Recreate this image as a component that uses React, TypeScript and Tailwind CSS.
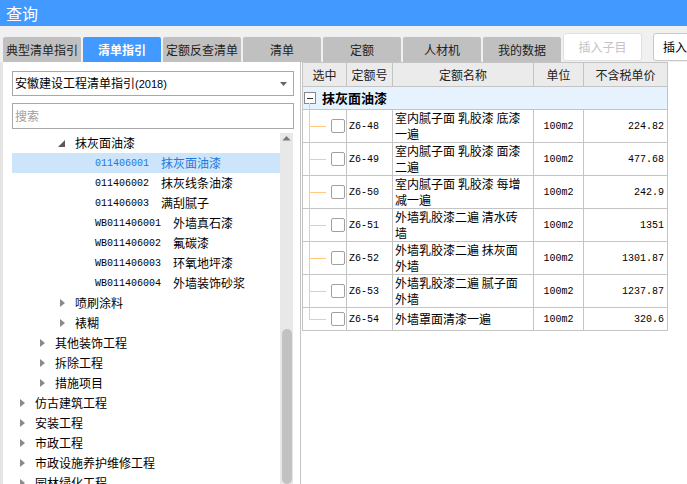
import type { ReactNode } from "react";

const tabs = ["典型清单指引", "清单指引", "定额反查清单", "清单", "定额", "人材机", "我的数据"];

type TreeNode = {
  indent: string;
  kind: "open" | "closed" | "leaf";
  code?: string;
  name: string;
  selected?: boolean;
};

const tree: TreeNode[] = [
  { indent: "pl-[46px]", kind: "open", name: "抹灰面油漆" },
  { indent: "pl-[83px]", kind: "leaf", code: "011406001", name: "抹灰面油漆", selected: true },
  { indent: "pl-[83px]", kind: "leaf", code: "011406002", name: "抹灰线条油漆" },
  { indent: "pl-[83px]", kind: "leaf", code: "011406003", name: "满刮腻子" },
  { indent: "pl-[83px]", kind: "leaf", code: "WB011406001", name: "外墙真石漆" },
  { indent: "pl-[83px]", kind: "leaf", code: "WB011406002", name: "氟碳漆" },
  { indent: "pl-[83px]", kind: "leaf", code: "WB011406003", name: "环氧地坪漆" },
  { indent: "pl-[83px]", kind: "leaf", code: "WB011406004", name: "外墙装饰砂浆" },
  { indent: "pl-[48px]", kind: "closed", name: "喷刷涂料" },
  { indent: "pl-[48px]", kind: "closed", name: "裱糊" },
  { indent: "pl-[28px]", kind: "closed", name: "其他装饰工程" },
  { indent: "pl-[28px]", kind: "closed", name: "拆除工程" },
  { indent: "pl-[28px]", kind: "closed", name: "措施项目" },
  { indent: "pl-[8px]", kind: "closed", name: "仿古建筑工程" },
  { indent: "pl-[8px]", kind: "closed", name: "安装工程" },
  { indent: "pl-[8px]", kind: "closed", name: "市政工程" },
  { indent: "pl-[8px]", kind: "closed", name: "市政设施养护维修工程" },
  { indent: "pl-[8px]", kind: "closed", name: "园林绿化工程" },
];

const rows = [
  { code: "Z6-48", name: ["室内腻子面 乳胶漆 底漆", "一遍"], price: "224.82" },
  { code: "Z6-49", name: ["室内腻子面 乳胶漆 面漆", "二遍"], price: "477.68" },
  { code: "Z6-50", name: ["室内腻子面 乳胶漆 每增", "减一遍"], price: "242.9" },
  { code: "Z6-51", name: ["外墙乳胶漆二遍 清水砖", "墙"], price: "1351" },
  { code: "Z6-52", name: ["外墙乳胶漆二遍 抹灰面", "外墙"], price: "1301.87" },
  { code: "Z6-53", name: ["外墙乳胶漆二遍 腻子面", "外墙"], price: "1237.87" },
  { code: "Z6-54", name: ["外墙罩面清漆一遍"], price: "320.6" },
];

const cjk = "font-['Noto_Sans_CJK_SC','Noto_Sans',sans-serif]";
const mono = "font-['Liberation_Mono','Noto_Sans_CJK_SC',monospace]";

function TreeRow({ node }: { node: TreeNode }) {
  let marker: ReactNode = null;
  if (node.kind === "open") {
    marker = (
      <span className="flex w-[17px] shrink-0 items-center">
        <svg width="7" height="7" viewBox="0 0 7 7">
          <polygon points="7,0 7,7 0,7" fill="#5a5a5a" />
        </svg>
      </span>
    );
  } else if (node.kind === "closed") {
    marker = (
      <span className="flex w-[15px] shrink-0 items-center">
        <svg width="5" height="8" viewBox="0 0 5 8">
          <polygon points="0,0 5,4 0,8" fill="#8a8a8a" />
        </svg>
      </span>
    );
  }
  return (
    <div
      className={`flex h-[20px] items-center whitespace-nowrap text-[12px] ${node.indent} ${
        node.selected ? "bg-[#cce5fa] text-[#1f78e0]" : "text-black"
      }`}
    >
      {marker}
      {node.code && <span className={`${mono} mr-[12px] text-[10px]`}>{node.code}</span>}
      <span>{node.name}</span>
    </div>
  );
}

export default function App() {
  return (
    <div className={`flex h-[484px] w-[687px] flex-col overflow-hidden bg-[#f0f0f0] ${cjk}`}>
      <div className="flex h-[26px] shrink-0 items-center bg-[#4299ff] pl-[6px] text-[16px] text-white">
        查询
      </div>

      <div className="flex h-[36px] shrink-0 items-end gap-[2px] overflow-hidden pl-[3px]">
        {tabs.map((t) => (
          <div
            key={t}
            className={`flex h-[25px] w-[78px] shrink-0 items-center justify-center whitespace-nowrap rounded-t-[2px] text-[12px] ${
              t === "清单指引" ? "bg-[#4299ff] font-bold text-white" : "bg-[#c0c0c0] text-[#222]"
            }`}
          >
            {t}
          </div>
        ))}
        <div className="mb-px flex h-[28px] w-[79px] shrink-0 items-center justify-center rounded-[3px] border border-[#e0e0e0] bg-white text-[12px] text-[#c4c4c4]">
          插入子目
        </div>
        <div className="mb-px ml-[9px] flex h-[28px] w-[60px] shrink-0 items-center rounded-[3px] border border-[#c8c8c8] bg-white pl-[9px] text-[12px] text-black">
          插入
        </div>
      </div>

      <div className="flex min-h-0 flex-1">
        <div className="flex w-[301px] shrink-0 flex-col border-l-[3px] border-r border-l-[#e4e4e4] border-r-[#c4c4c4] bg-white pl-[9px] pt-[9px]">
          <div className="flex h-[25px] w-[282px] items-center justify-between border border-[#a8a8a8] pl-[2px] pr-[6px] text-[12px] text-black">
            <span>
              安徽建设工程清单指引<span className="font-['Liberation_Sans',sans-serif] text-[11px]">(2018)</span>
            </span>
            <svg width="7" height="4" viewBox="0 0 7 4">
              <polygon points="0,0 7,0 3.5,4" fill="#666" />
            </svg>
          </div>
          <div className="mt-[7px] flex h-[26px] w-[282px] items-center border border-[#a8a8a8] pl-[2px] text-[12px] text-[#a0a0a0]">
            搜索
          </div>
          <div className="mt-[4px] flex min-h-0 flex-1">
            <div className="w-[268px] shrink-0">
              {tree.map((n, i) => (
                <TreeRow key={i} node={n} />
              ))}
            </div>
            <div className="flex w-[13px] flex-col items-center bg-[#e8e8e8]">
              <svg className="mt-[3px]" width="9" height="5" viewBox="0 0 9 5">
                <polygon points="0,5 9,5 4.5,0" fill="#7a7a7a" />
              </svg>
              <div className="mt-[188px] h-[170px] w-[10px] rounded-full bg-[#c2c2c2]" />
            </div>
          </div>
        </div>

        <div className="flex-1 bg-white">
          <div className="ml-px grid w-[366px] grid-cols-[44px_46px_141px_50px_84px] border-l border-t border-[#c4c4c4] text-[12px] text-black">
            {["选中", "定额号", "定额名称", "单位", "不含税单价"].map((h) => (
              <div
                key={h}
                className="flex h-[24px] items-center justify-center border-b border-r border-[#c4c4c4] bg-[#ebebeb] text-[#222]"
              >
                {h}
              </div>
            ))}

            <div className="relative col-span-5 flex h-[23px] items-center border-b border-r border-[#c4c4c4] bg-[#e6f3ff]">
              <div className="ml-px flex h-[12px] w-[12px] items-center justify-center border border-[#888] bg-white">
                <div className="h-px w-[6px] bg-[#333]" />
              </div>
              <span className="ml-[6px] text-[13px] font-bold">抹灰面油漆</span>
              <div className="absolute -bottom-px left-[6px] top-[16px] w-px bg-[#ffc97e]" />
            </div>

            {rows.map((r, i) => {
              const last = i === rows.length - 1;
              const h = last ? "h-[23px]" : "h-[33px]";
              return (
                <div key={r.code} className="contents">
                  <div className={`relative flex ${h} items-center justify-end border-b border-r border-[#c4c4c4] pr-px`}>
                    <div
                      className={`absolute left-[6px] top-0 w-px bg-[#ffc97e] ${last ? "h-[11px]" : "-bottom-px"}`}
                    />
                    <div
                      className={`absolute left-[6px] h-px w-[17px] bg-[#ffc97e] ${last ? "top-[11px]" : "top-[16px]"}`}
                    />
                    <div className="h-[14px] w-[14px] rounded-[2px] border border-[#a0a0a0] bg-white" />
                  </div>
                  <div className={`flex ${h} items-center border-b border-r border-[#c4c4c4] pl-[2px] ${mono} text-[10px]`}>
                    {r.code}
                  </div>
                  <div className={`flex ${h} flex-col justify-center border-b border-r border-[#c4c4c4] pl-[2px] leading-[16px] whitespace-pre`}>
                    {r.name.map((l) => (
                      <span key={l} className="block h-[16px]">
                        {l}
                      </span>
                    ))}
                  </div>
                  <div className={`flex ${h} items-center justify-center border-b border-r border-[#c4c4c4] ${mono} text-[10px]`}>
                    100m2
                  </div>
                  <div className={`flex ${h} items-center justify-end border-b border-r border-[#c4c4c4] pr-[3px] ${mono} text-[10px]`}>
                    {r.price}
                  </div>
                </div>
              );
            })}
          </div>
        </div>
      </div>
    </div>
  );
}
